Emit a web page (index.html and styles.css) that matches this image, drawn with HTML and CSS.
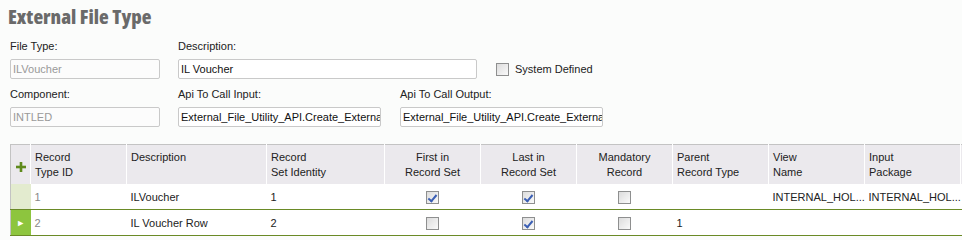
FILE: index.html
```html
<!DOCTYPE html>
<html lang="en">
<head>
    <meta charset="UTF-8">
    <title>External File Type</title>
    <link rel="stylesheet" href="styles.css">
</head>
<body>

    <h1 class="page-title">External File Type</h1>

    <!-- Header fields -->
    <div class="form">
        <div class="form-row">
            <div class="field w-150">
                <label>File Type:</label>
                <div class="input disabled">ILVoucher</div>
            </div>
            <div class="field w-299">
                <label>Description:</label>
                <div class="input">IL Voucher</div>
            </div>
            <div class="check-field">
                <span class="check"></span>
                <span>System Defined</span>
            </div>
        </div>
        <div class="form-row">
            <div class="field w-150">
                <label>Component:</label>
                <div class="input disabled">INTLED</div>
            </div>
            <div class="field w-203">
                <label>Api To Call Input:</label>
                <div class="input">External_File_Utility_API.Create_Externa</div>
            </div>
            <div class="field w-203 gap-19">
                <label>Api To Call Output:</label>
                <div class="input">External_File_Utility_API.Create_Externa</div>
            </div>
        </div>
    </div>

    <!-- Record types grid -->
    <table class="grid">
        <colgroup>
            <col style="width:20px">
            <col style="width:96px">
            <col style="width:140px">
            <col style="width:118px">
            <col style="width:96px">
            <col style="width:96px">
            <col style="width:96px">
            <col style="width:96px">
            <col style="width:96px">
            <col style="width:96px">
            <col style="width:96px">
        </colgroup>
        <thead>
            <tr>
                <th class="marker">
                    <svg width="10" height="10" viewBox="0 0 10 10"><rect x="3.7" y="0" width="2.6" height="10" fill="#5f8a1c"/><rect x="0" y="3.7" width="10" height="2.6" fill="#5f8a1c"/></svg>
                </th>
                <th>Record<br>Type ID</th>
                <th>Description</th>
                <th>Record<br>Set Identity</th>
                <th class="center">First in<br>Record Set</th>
                <th class="center">Last in<br>Record Set</th>
                <th class="center">Mandatory<br>Record</th>
                <th>Parent<br>Record Type</th>
                <th>View<br>Name</th>
                <th>Input<br>Package</th>
                <th></th>
            </tr>
        </thead>
        <tbody>
            <tr>
                <td class="marker"></td>
                <td class="muted">1</td>
                <td>ILVoucher</td>
                <td>1</td>
                <td class="center"><span class="check on"></span></td>
                <td class="center"><span class="check on"></span></td>
                <td class="center"><span class="check"></span></td>
                <td></td>
                <td>INTERNAL_HOL...</td>
                <td>INTERNAL_HOL...</td>
                <td></td>
            </tr>
            <tr class="current">
                <td class="marker">&#9658;</td>
                <td class="muted">2</td>
                <td>IL Voucher Row</td>
                <td>2</td>
                <td class="center"><span class="check"></span></td>
                <td class="center"><span class="check on"></span></td>
                <td class="center"><span class="check"></span></td>
                <td>1</td>
                <td></td>
                <td></td>
                <td></td>
            </tr>
        </tbody>
    </table>

</body>
</html>
```
FILE: styles.css
```css
/* Page */
body {
    margin: 0;
    background-color: #fbfcfb;
    color: #222;
    font-family: "Liberation Sans", Arial, sans-serif;
    font-size: 11px;
    overflow: hidden;
}

.page-title {
    margin: 5px 0 0 8px;
    font-family: "Open Sans", sans-serif;
    font-stretch: 75%;
    font-size: 20px;
    line-height: 24px;
    font-weight: 800;
    color: #6a6a6a;
}

/* Form */
.form {
    padding: 10px 0 0 10px;
}

.form-row {
    display: flex;
    gap: 18px;
    margin-bottom: 8px;
}

.field label {
    display: block;
    line-height: 14px;
    margin-bottom: 6px;
    color: #222;
}

.w-150 { width: 150px; }
.w-299 { width: 299px; }
.w-203 { width: 203px; }
.gap-19 { margin-left: 1px; }

.input {
    box-sizing: border-box;
    height: 20px;
    line-height: 18px;
    padding: 0 2px;
    border: 1px solid #c9c9c9;
    border-radius: 2px;
    background: #fff;
    color: #111;
    white-space: nowrap;
    overflow: hidden;
}

.input.disabled {
    color: #999;
    background: #fcfcfc;
}

.check-field {
    display: flex;
    align-items: center;
    gap: 6px;
    margin: 24px 0 0 1px;
    height: 13px;
    line-height: 13px;
}

/* Checkbox */
.check {
    display: inline-block;
    box-sizing: border-box;
    width: 13px;
    height: 13px;
    border: 1px solid #8e8f8f;
    background: linear-gradient(135deg, #dcdcdc, #fafafa);
    vertical-align: middle;
    position: relative;
}

.check.on::after {
    content: "";
    position: absolute;
    left: 3px;
    top: 1px;
    width: 3px;
    height: 7px;
    border: solid #3b5fb4;
    border-width: 0 2px 2px 0;
    transform: rotate(40deg);
}

/* Grid */
.grid {
    margin-left: 10px;
    margin-top: 17px;
    border-collapse: collapse;
    table-layout: fixed;
    width: 1046px;
    border-top: 1px solid #c3c3c3;
    border-left: 1px solid #c3c3c3;
}

.grid th {
    box-sizing: border-box;
    height: 39px;
    padding: 5px 4px 0;
    background: #ebe9ed;
    border-left: 1px solid #fff;
    text-align: left;
    vertical-align: top;
    font-weight: normal;
    line-height: 15px;
    color: #222;
    white-space: nowrap;
    overflow: hidden;
}

.grid th.marker {
    border-left: none;
    padding: 17px 0 0 5px;
}

.grid th.marker svg {
    display: block;
}

.grid td {
    box-sizing: border-box;
    height: 26px;
    padding: 1px 4px 0;
    background: #fff;
    border-bottom: 1px solid #6a8a26;
    white-space: nowrap;
    overflow: hidden;
}

.grid .center {
    text-align: center;
}

.grid td.marker {
    background: #e3ebcf;
    padding: 0;
    text-align: center;
    color: #fff;
    font-size: 9px;
}

.grid tr.current td.marker {
    background: #8dc53e;
}

.grid td.muted {
    color: #888;
}
```
